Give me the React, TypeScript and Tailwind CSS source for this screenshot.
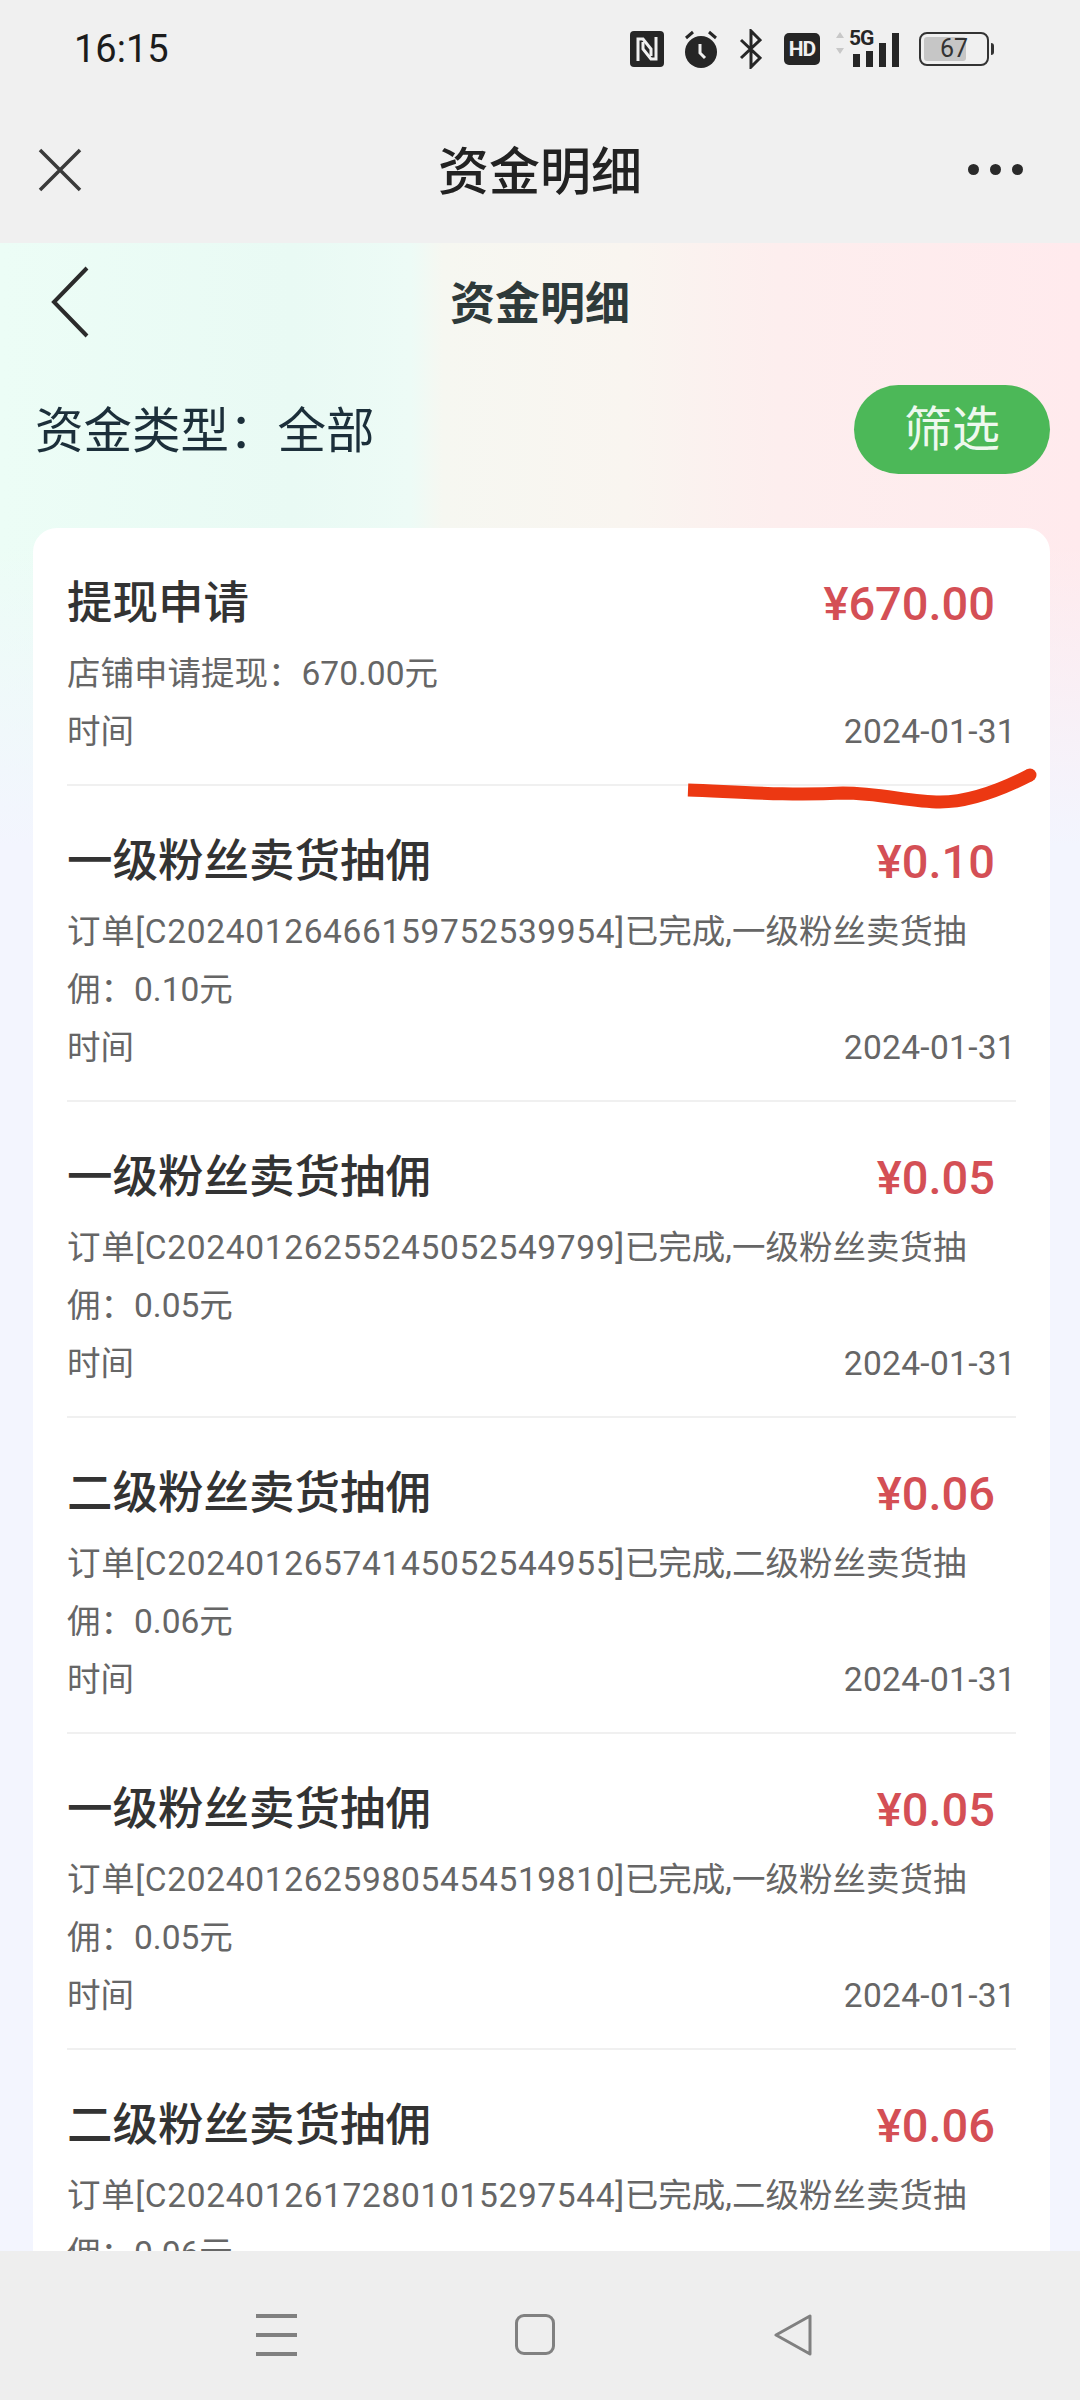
const cjk = "font-['Roboto','Noto_Sans_CJK_SC',sans-serif]";

const rows = [
  { title: "提现申请", amount: "¥670.00", code: "", line1: "店铺申请提现：670.00元", line2: "" },
  { title: "一级粉丝卖货抽佣", amount: "¥0.10", code: "订单[C20240126466159752539954]", line1: "已完成,一级粉丝卖货抽", line2: "佣：0.10元" },
  { title: "一级粉丝卖货抽佣", amount: "¥0.05", code: "订单[C20240126255245052549799]", line1: "已完成,一级粉丝卖货抽", line2: "佣：0.05元" },
  { title: "二级粉丝卖货抽佣", amount: "¥0.06", code: "订单[C20240126574145052544955]", line1: "已完成,二级粉丝卖货抽", line2: "佣：0.06元" },
  { title: "一级粉丝卖货抽佣", amount: "¥0.05", code: "订单[C20240126259805454519810]", line1: "已完成,一级粉丝卖货抽", line2: "佣：0.05元" },
  { title: "二级粉丝卖货抽佣", amount: "¥0.06", code: "订单[C20240126172801015297544]", line1: "已完成,二级粉丝卖货抽", line2: "佣：0.06元" },
];

function StatusBar() {
  return (
    <div className="h-[96px] shrink-0 flex items-center justify-between pl-[74px] pr-[86px] pt-[1px]">
      <span className="text-[38px] leading-none text-[#1c1c1c]">16:15</span>
      <div className="flex items-center">
        <svg width="34" height="36" viewBox="0 0 34 36" className="mr-[19px]">
          <rect x="0" y="0" width="34" height="36" rx="4" fill="#262626" />
          <path d="M8 30V8h5l8 10v7" stroke="#f0f0f0" strokeWidth="3" fill="none" />
          <path d="M26 6v22h-5l-8-10v-7" stroke="#f0f0f0" strokeWidth="3" fill="none" />
        </svg>
        <svg width="36" height="40" viewBox="0 0 36 40" className="mr-[20px]">
          <circle cx="18" cy="23" r="16" fill="#262626" />
          <path d="M3 9l7-6M33 9l-7-6" stroke="#262626" strokeWidth="3" />
          <path d="M17 15v9l5 5" stroke="#f0f0f0" strokeWidth="3" fill="none" />
        </svg>
        <svg width="23" height="40" viewBox="0 0 23 40" className="mr-[22px]">
          <path d="M2 11l19 18-9 9V2l9 9L2 29" stroke="#262626" strokeWidth="3" fill="none" />
        </svg>
        <span className="w-[36px] h-[32px] mr-[15px] rounded-[5px] bg-[#262626] text-[#f0f0f0] text-[21px] font-bold leading-[32px] text-center tracking-[-1px]">
          HD
        </span>
        <div className="relative w-[66px] h-[36px] mr-[18px]">
          <svg width="10" height="24" viewBox="0 0 10 24" className="absolute left-0 top-0">
            <path d="M5 1l4 6H1zM5 23l4-6H1z" fill="#c8c8c8" />
          </svg>
          <span className="absolute left-[14px] -top-[3px] text-[21px] font-bold leading-none text-[#262626] tracking-[-1px]">
            5G
          </span>
          <div className="absolute left-[18px] bottom-0 flex items-end gap-[6px]">
            <div className="w-[7px] h-[13px] bg-[#262626]" />
            <div className="w-[7px] h-[16px] bg-[#262626]" />
            <div className="w-[7px] h-[24px] bg-[#262626]" />
            <div className="w-[7px] h-[34px] bg-[#262626]" />
          </div>
        </div>
        <div className="relative w-[70px] h-[34px] rounded-[8px] border-2 border-[#333] p-[3px]">
          <div className="w-[42px] h-full rounded-[3px] bg-[#c6c6c6]" />
          <span className="absolute inset-0 text-center text-[25px] leading-[30px] text-[#333]">67</span>
        </div>
        <div className="w-[3px] h-[12px] ml-[2px] rounded-r bg-[#333]" />
      </div>
    </div>
  );
}

function TopBar() {
  return (
    <div className="h-[147px] shrink-0 flex items-center px-[38px]">
      <div className="flex-1">
        <svg width="44" height="44" viewBox="0 0 44 44">
          <path d="M2 2l40 40M42 2L2 42" stroke="#3a3a3a" strokeWidth="3.5" />
        </svg>
      </div>
      <span className="pt-[5px] text-[51px] leading-none font-medium text-[#222]">资金明细</span>
      <div className="flex-1 flex justify-end">
        <div className="flex gap-[11px] mr-[19px]">
          <span className="w-[11px] h-[11px] rounded-full bg-[#2a2a2a]" />
          <span className="w-[11px] h-[11px] rounded-full bg-[#2a2a2a]" />
          <span className="w-[11px] h-[11px] rounded-full bg-[#2a2a2a]" />
        </div>
      </div>
    </div>
  );
}

type RowProps = { title: string; amount: string; code: string; line1: string; line2: string; last: boolean };

function Row({ title, amount, code, line1, line2, last }: RowProps) {
  return (
    <div className={`pt-[47px] pb-[23px] ${last ? "" : "border-b-2 border-[#f0f0f0]"}`}>
      <div className="flex items-center justify-between pr-[21px]">
        <span className="text-[45.5px] leading-[58px] font-medium text-[#333]">{title}</span>
        <span className="text-[47px] leading-[58px] font-medium text-[#d44f55]">{amount}</span>
      </div>
      <div className="mt-[12px] text-[33.5px] leading-[58px] text-[#666]">
        {code && <span className="tracking-[0.65px]">{code}</span>}
        <span>{line1}</span>
      </div>
      {line2 && <div className="text-[33.5px] leading-[58px] text-[#666]">{line2}</div>}
      <div className="flex justify-between text-[33.5px] leading-[58px] text-[#666]">
        <span>时间</span>
        <span className="tracking-[0.3px]">2024-01-31</span>
      </div>
    </div>
  );
}

export default function App() {
  return (
    <div className={`w-[1080px] h-[2400px] flex flex-col overflow-hidden bg-[#f0f0f0] ${cjk}`}>
      <StatusBar />
      <TopBar />
      <div className="flex-1 min-h-0 overflow-hidden relative bg-[linear-gradient(180deg,transparent_15%,#f3f5fe_30%),linear-gradient(90deg,#ecfdf6_0%,#e9faf4_27%,#edfbf6_38%,#f6f7f1_41%,#f9f5f0_58%,#fdeeee_72%,#ffeaed_100%)]">
        <div className="h-[120px] pt-[2px] flex items-center justify-center relative">
          <svg width="40" height="72" viewBox="0 0 40 72" className="absolute left-[50px] top-[23px]">
            <path d="M37 2L4 36l33 34" stroke="#2b2b2b" strokeWidth="4" fill="none" />
          </svg>
          <span className="text-[45px] leading-none font-bold text-[#2e3a3a]">资金明细</span>
        </div>
        <div className="h-[89px] mt-[22px] flex items-center justify-between pl-[35px] pr-[30px]">
          <span className="pt-[6px] text-[48.5px] leading-none text-[#1c2f3a]">资金类型：全部</span>
          <button className="w-[196px] h-[89px] rounded-[45px] bg-[#4cb858] text-[48px] leading-none text-[#eef8ee]">
            筛选
          </button>
        </div>
        <div className="mt-[54px] ml-[33px] mr-[30px] rounded-t-[24px] bg-white px-[34px] relative">
          {rows.map((r, i) => (
            <Row key={i} {...r} last={i === rows.length - 1} />
          ))}
        </div>
        <svg width="360" height="50" viewBox="0 0 360 50" className="absolute left-[680px] top-[520px]">
          <path
            d="M8 27C60 29 110 33 163 30C200 30 230 39 260 39C285 39 315 30 350 12"
            stroke="#ec3812"
            strokeWidth="13"
            fill="none"
          />
          <circle cx="350" cy="12" r="6.5" fill="#ec3812" />
        </svg>
      </div>
      <div className="h-[149px] shrink-0 flex items-center justify-center gap-[218px] pt-[18px] pr-[11px] bg-[#eeeeee]">
        <div className="flex flex-col gap-[15px] w-[41px]">
          <div className="h-[4px] bg-[#808080]" />
          <div className="h-[4px] bg-[#808080]" />
          <div className="h-[4px] bg-[#808080]" />
        </div>
        <div className="w-[40px] h-[41px] rounded-[9px] border-[3px] border-[#808080]" />
        <svg width="40" height="42" viewBox="0 0 40 42">
          <path d="M37 2v38L3 21z" stroke="#808080" strokeWidth="3" strokeLinejoin="round" fill="none" />
        </svg>
      </div>
    </div>
  );
}
